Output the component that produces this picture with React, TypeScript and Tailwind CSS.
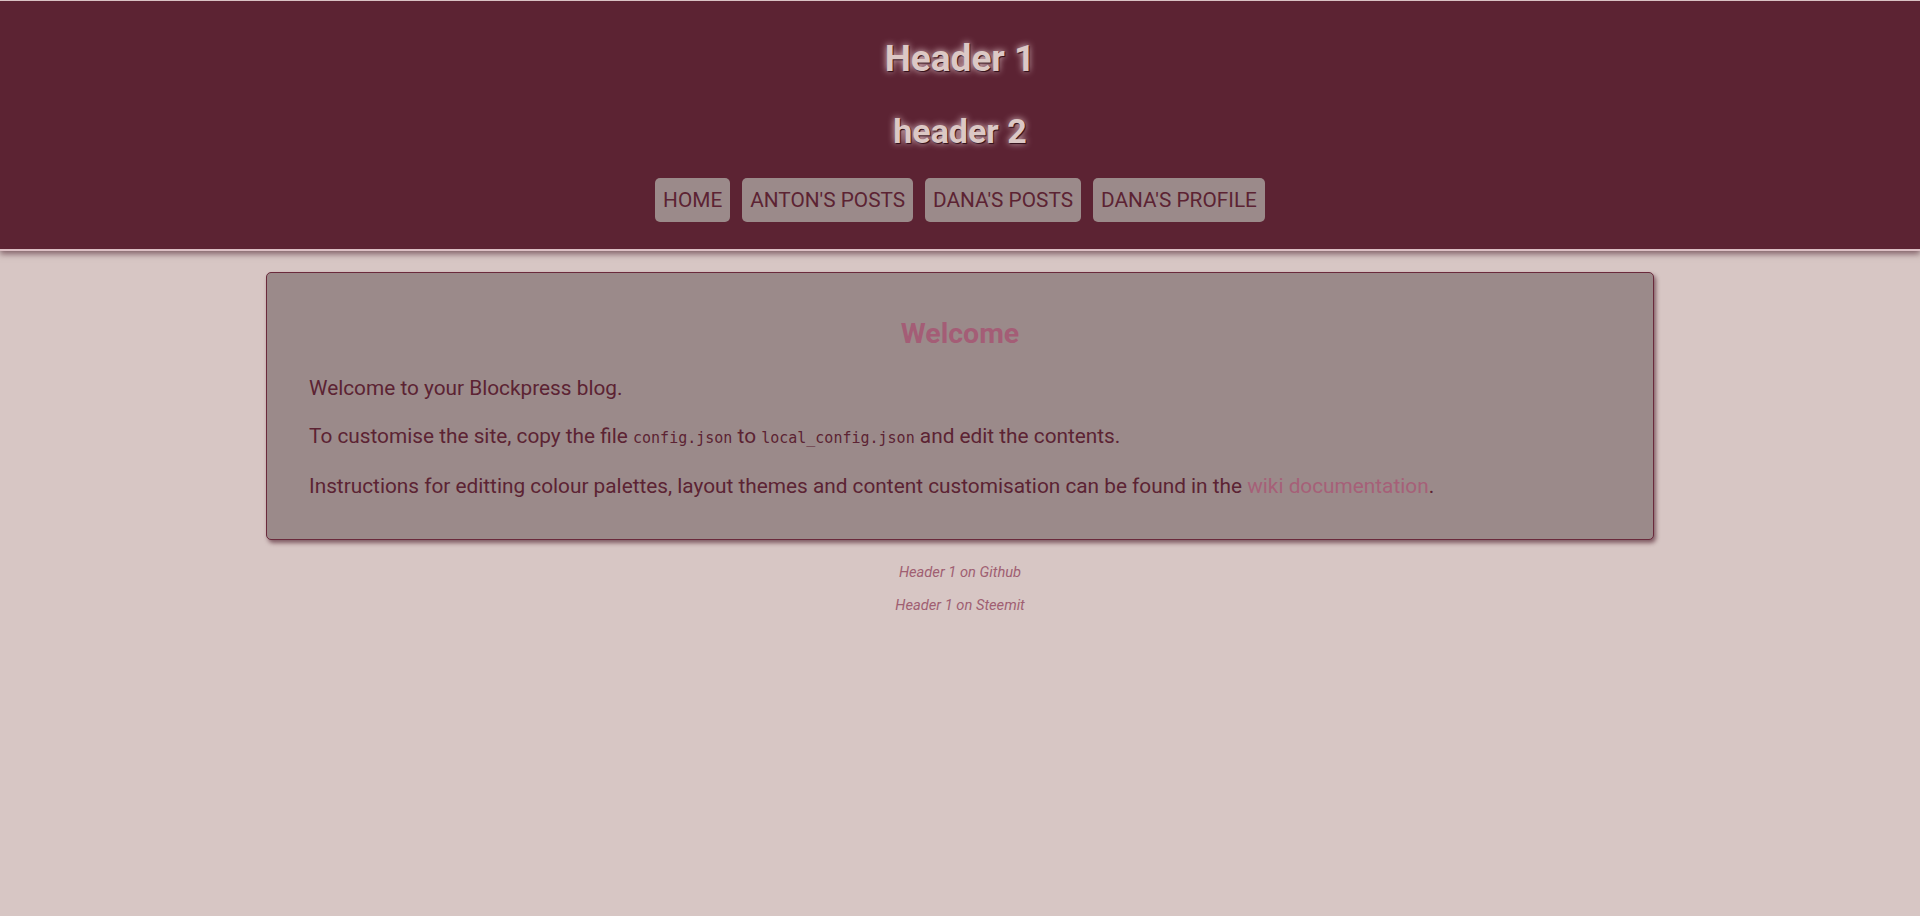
const navItems = ["HOME", "ANTON'S POSTS", "DANA'S POSTS", "DANA'S PROFILE"];

function Header() {
  return (
    <header className="bg-[#5c2333] border-t border-[#d9c2c4] border-b-2 border-b-[#dcbfc4] pt-[36px] pb-[27px] shadow-[0_3px_6px_rgba(60,15,30,0.55)] text-center">
      <h1 className="text-[37px] leading-[43px] font-bold text-[#dcc8c5] [text-shadow:1px_1px_1px_#2e0c16,0_0_7px_#e8ccd0]">
        Header 1
      </h1>
      <h2 className="mt-[31px] text-[34px] leading-[41px] font-bold text-[#dcc8c5] [text-shadow:1px_1px_1px_#2e0c16,0_0_7px_#e8ccd0]">
        header 2
      </h2>
      <nav className="mt-[26px] flex justify-center gap-3">
        {navItems.map((item) => (
          <a
            key={item}
            href="#"
            className="bg-[#9b8a8a] text-[#5c2333] text-[20.8px] leading-[28px] px-2 py-2 rounded-[5px]"
          >
            {item}
          </a>
        ))}
      </nav>
    </header>
  );
}

function Code({ children }: { children: React.ReactNode }) {
  return <code className="font-['DejaVu_Sans_Mono','Liberation_Mono',monospace] text-[15px]">{children}</code>;
}

function WelcomeCard() {
  return (
    <section className="w-[1388px] mx-auto mt-[21px] bg-[#9b8a8a] border border-[#6a2a3c] rounded-[5px] shadow-[2px_3px_4px_rgba(70,20,35,0.6)] px-[42px] pt-[44px] pb-[39px] text-[#5c2333]">
      <h3 className="text-center text-[28.5px] leading-[34px] font-bold text-[#a45d76] mb-[23px]">Welcome</h3>
      <div className="flex flex-col gap-5 text-[20.8px] leading-[28px]">
        <p>Welcome to your Blockpress blog.</p>
        <p>
          To customise the site, copy the file <Code>config.json</Code> to <Code>local_config.json</Code> and edit the contents.
        </p>
        <p>
          Instructions for editting colour palettes, layout themes and content customisation can be found in the{" "}
          <a href="#" className="text-[#a66078]">wiki documentation</a>.
        </p>
      </div>
    </section>
  );
}

export default function App() {
  return (
    <div className="min-h-screen bg-[#d7c6c4] font-['Roboto','Liberation_Sans',sans-serif]">
      <Header />
      <WelcomeCard />
      <footer className="mt-[22px] flex flex-col items-center gap-[13px] text-[14.7px] leading-[20px] italic text-[#a05f72]">
        <a href="#">Header 1 on Github</a>
        <a href="#">Header 1 on Steemit</a>
      </footer>
    </div>
  );
}
